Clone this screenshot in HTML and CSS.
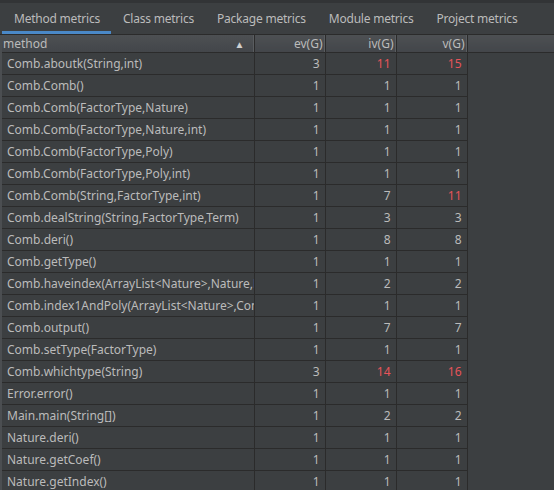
FILE: index.html
```html
<!doctype html>
<html lang="en">
    <head>
        <meta charset="utf-8">
        <title>Metrics</title>
        <link rel="stylesheet" href="styles.css">
    </head>
    <body>
        <div class="topbar"></div>
        <div class="tabs">
            <span class="tab is-active">Method metrics</span>
            <span class="tab">Class metrics</span>
            <span class="tab">Package metrics</span>
            <span class="tab">Module metrics</span>
            <span class="tab">Project metrics</span>
        </div>
        <div class="panel">
            <table class="metrics">
                <colgroup>
                    <col class="c-name">
                    <col class="c-num">
                    <col class="c-num">
                    <col class="c-num">
                    <col>
                </colgroup>
                <thead>
                    <tr>
                        <th class="name">method<span class="sort">&#9650;</span></th>
                        <th>ev(G)</th>
                        <th>iv(G)</th>
                        <th>v(G)</th>
                        <th class="fill"></th>
                    </tr>
                </thead>
                <tbody>
                    <tr><td class="name">Comb.aboutk(String,int)</td><td>3</td><td class="hot">11</td><td class="hot">15</td><td class="fill"></td></tr>
                    <tr><td class="name">Comb.Comb()</td><td>1</td><td>1</td><td>1</td><td class="fill"></td></tr>
                    <tr><td class="name">Comb.Comb(FactorType,Nature)</td><td>1</td><td>1</td><td>1</td><td class="fill"></td></tr>
                    <tr><td class="name">Comb.Comb(FactorType,Nature,int)</td><td>1</td><td>1</td><td>1</td><td class="fill"></td></tr>
                    <tr><td class="name">Comb.Comb(FactorType,Poly)</td><td>1</td><td>1</td><td>1</td><td class="fill"></td></tr>
                    <tr><td class="name">Comb.Comb(FactorType,Poly,int)</td><td>1</td><td>1</td><td>1</td><td class="fill"></td></tr>
                    <tr><td class="name">Comb.Comb(String,FactorType,int)</td><td>1</td><td>7</td><td class="hot">11</td><td class="fill"></td></tr>
                    <tr><td class="name">Comb.dealString(String,FactorType,Term)</td><td>1</td><td>3</td><td>3</td><td class="fill"></td></tr>
                    <tr><td class="name">Comb.deri()</td><td>1</td><td>8</td><td>8</td><td class="fill"></td></tr>
                    <tr><td class="name">Comb.getType()</td><td>1</td><td>1</td><td>1</td><td class="fill"></td></tr>
                    <tr><td class="name">Comb.haveindex(ArrayList&lt;Nature&gt;,Nature,Poly)</td><td>1</td><td>2</td><td>2</td><td class="fill"></td></tr>
                    <tr><td class="name">Comb.index1AndPoly(ArrayList&lt;Nature&gt;,Comb)</td><td>1</td><td>1</td><td>1</td><td class="fill"></td></tr>
                    <tr><td class="name">Comb.output()</td><td>1</td><td>7</td><td>7</td><td class="fill"></td></tr>
                    <tr><td class="name">Comb.setType(FactorType)</td><td>1</td><td>1</td><td>1</td><td class="fill"></td></tr>
                    <tr><td class="name">Comb.whichtype(String)</td><td>3</td><td class="hot">14</td><td class="hot">16</td><td class="fill"></td></tr>
                    <tr><td class="name">Error.error()</td><td>1</td><td>1</td><td>1</td><td class="fill"></td></tr>
                    <tr><td class="name">Main.main(String[])</td><td>1</td><td>2</td><td>2</td><td class="fill"></td></tr>
                    <tr><td class="name">Nature.deri()</td><td>1</td><td>1</td><td>1</td><td class="fill"></td></tr>
                    <tr><td class="name">Nature.getCoef()</td><td>1</td><td>1</td><td>1</td><td class="fill"></td></tr>
                    <tr><td class="name">Nature.getIndex()</td><td>1</td><td>1</td><td>1</td><td class="fill"></td></tr>
                </tbody>
            </table>
        </div>
    </body>
</html>
```

FILE: styles.css
```css
html {
    font-family: "Noto Sans", "Open Sans", sans-serif;
    font-size: 12px;
}
body {
    margin: 0;
    background-color: #3c3f41;
    color: #bbbbbb;
    overflow: hidden;
}
.topbar {
    height: 3px;
    background-color: #323436;
}
.tabs {
    display: flex;
    height: 32px;
    padding-left: 2px;
    border-bottom: 1px solid #2b2b2b;
    box-sizing: border-box;
}
.tab {
    padding: 7px 11px 0 12px;
    color: #bbbbbb;
    white-space: nowrap;
    letter-spacing: -0.22px;
}
.tab.is-active {
    border-bottom: 3px solid #4a88c7;
}
.panel {
    border-left: 2px solid #4b4e51;
}
.metrics {
    width: 100%;
    border-collapse: collapse;
    table-layout: fixed;
}
.c-name {
    width: 252px;
}
.c-num {
    width: 71px;
}
.metrics th {
    height: 17px;
    padding: 0 2px 0 0;
    font-weight: normal;
    text-align: right;
    color: #bbbbbb;
    background: linear-gradient(#4d5053, #43464a);
    border-right: 1px solid #2b2b2b;
    border-bottom: 1px solid #2b2b2b;
    box-shadow: inset -1px 0 0 #5a5d60;
    line-height: 16px;
    white-space: nowrap;
}
.metrics th.name {
    text-align: left;
    padding-left: 1px;
}
.metrics th.fill {
    border-right: none;
    box-shadow: none;
}
.sort {
    float: right;
    font-size: 10px;
    margin-right: 7px;
    color: #d0d0d0;
}
.metrics td {
    height: 21px;
    padding: 0 5px 0 0;
    text-align: right;
    border: 1px solid #2b2b2b;
    border-left: none;
    white-space: nowrap;
    overflow: hidden;
    line-height: 20px;
}
.metrics td.name {
    text-align: left;
    padding-left: 5px;
    padding-right: 0;
    text-overflow: clip;
}
.metrics td.fill {
    border: none;
}
.hot {
    color: #e5545a;
}
```
